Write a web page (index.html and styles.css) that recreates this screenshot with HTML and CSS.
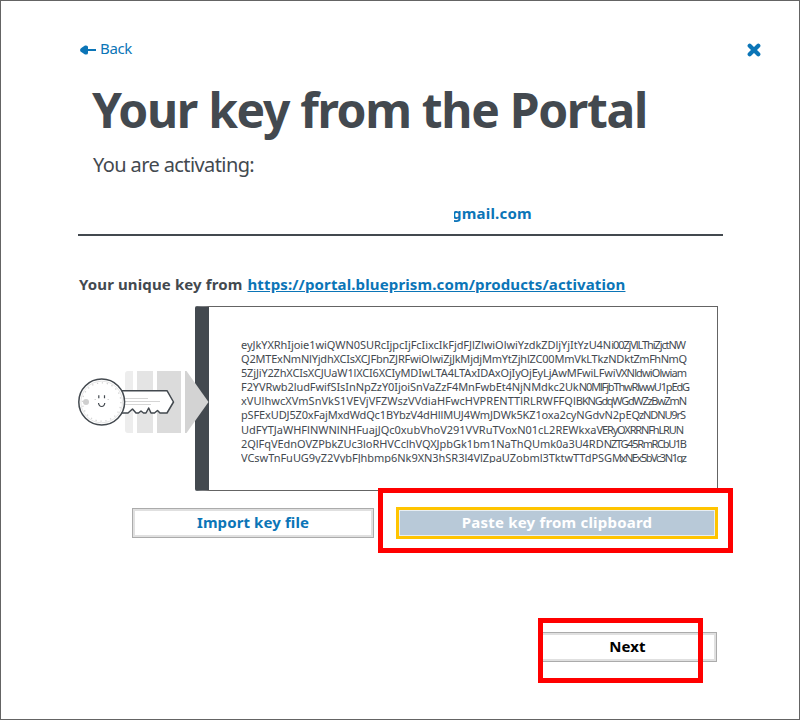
FILE: index.html
```
<!DOCTYPE html>
<html lang="en">
<head>
<meta charset="utf-8">
<title>Your key from the Portal</title>
<link rel="stylesheet" href="styles.css">
</head>
<body>
<main class="window">
  <header class="topbar">
    <a class="back"><svg width="17" height="10" viewBox="0 0 17 10"><path d="M0 5 Q0 3.500 2 2.500 L5 .5 Q8 0 8 2 V4 H16 V6 H8 V8 Q8 10 5 9.500 L2 7.500 Q0 6.500 0 5Z" fill="#0b75b7"/></svg><span>Back</span></a>
    <svg class="close" width="14" height="14" viewBox="0 0 14 14"><path d="M2.700 2.700 11.300 11.300M11.300 2.700 2.700 11.300" stroke="#0b75b7" stroke-width="4.200" stroke-linecap="round"/></svg>
  </header>
  <h1 class="title">Your key from the Portal</h1>
  <p class="subtitle">You are activating:</p>
  <div class="account"><span class="email">gmail.com</span></div>
  <p class="source"><span class="source-label">Your unique key from</span><a class="portal">https://portal.blueprism.com/products/activation</a></p>
  <section class="entry">
    <svg class="key-art" width="132" height="64" viewBox="0 0 132 64">
      <path d="M50 1H55V63H50Q47 63 47 60V4Q47 1 50 1Z" fill="#ededed"/>
      <path d="M59 1H75V63H59Z" fill="#e4e4e4"/>
      <path d="M79 1H103V63H79Z" fill="#dbdbdb"/>
      <path d="M107 1H108.500L130.500 32 108.500 63H107Z" fill="#d3d3d3"/>
      <path d="M43 20.700H89L95.500 32 89 43H82L79.500 40.500 76.500 43H73L70.700 38 68 43H65.500L63 41 60.500 43H58L54.500 39 50 43H43Z" fill="#fff" stroke="#43494f" stroke-width="1.500" stroke-linejoin="round"/>
      <path d="M44 28.500H70M44 31.500H82M44 34.500H73" stroke="#d5d5d5"/>
      <circle cx="23.700" cy="32" r="22.900" fill="#fff" stroke="#43494f" stroke-width="1.500"/>
      <circle cx="23.700" cy="32" r="20.800" fill="none" stroke="#dedede" stroke-width=".8"/>
      <circle cx="23.700" cy="32" r="19.200" fill="none" stroke="#d5d5d5" stroke-width="1.300" stroke-dasharray="1.300 3.700"/>
      <circle cx="8" cy="32" r="3" fill="#cfcfcf"/>
      <path d="M20.800 25.300V28.300M26.500 25.300V28.300M20.500 33Q21 36.500 23.700 36.500 26.300 36.500 26.800 33" fill="none" stroke="#43494f" stroke-width="1.200"/>
      <path d="M16.500 29.500H18M29.500 29.500H31" stroke="#d5d5d5"/>
    </svg>
    <div class="key-box">
      <svg class="key-text" width="455" height="123" viewBox="0 0 455 123">
        <text y="9"><tspan x="0" textLength="373">eyJkYXRhIjoie1wiQWN0SURcIjpcIjFcIixcIkFjdFJlZlwiOlwiYzdkZDljYjItYzU4Ni</tspan><tspan x="372" textLength="73">00ZjVlLThiZjctNW</tspan></text>
        <text y="23"><tspan x="0" textLength="389">Q2MTExNmNlYjdhXCIsXCJFbnZJRFwiOlwiZjJkMjdjMmYtZjhlZC00MmVkLTkzNDk</tspan><tspan x="389" textLength="57">tZmFhNmQ</tspan></text>
        <text y="37"><tspan x="0" textLength="381">5ZjJiY2ZhXCIsXCJUaW1lXCI6XCIyMDIwLTA4LTAxIDAxOjIyOjEyLjAwMFwiLFwiV</tspan><tspan x="380" textLength="66">XNldwiOlwiam</tspan></text>
        <text y="51"><tspan x="0" textLength="346">F2YVRwb2ludFwifSIsInNpZzY0IjoiSnVaZzF4MnFwbEt4NjNMdkc2UkN</tspan><tspan x="345" textLength="104">0MlFjbThwRlwwU1pEdG</tspan></text>
        <text y="65"><tspan x="0" textLength="342">xVUlhwcXVmSnVkS1VEVjVFZWszVVdiaHFwcHVPRENTTlRLRWFFQlB</tspan><tspan x="341" textLength="105">KNGdqWGdWZzBwZmN</tspan></text>
        <text y="79"><tspan x="0" textLength="399">pSFExUDJ5Z0xFajMxdWdQc1BYbzV4dHllMUJ4WmJDWk5KZ1oxa2cyNGdvN2pEQ</tspan><tspan x="398" textLength="47">zNDNU9rS</tspan></text>
        <text y="94"><tspan x="0" textLength="362">UdFYTJaWHFlNWNlNHFuajJQc0xubVhoV291VVRuTVoxN01cL2REWkxaV</tspan><tspan x="361" textLength="82">ERyOXRRNFhLRUN</tspan></text>
        <text y="108"><tspan x="0" textLength="371">2QlFqVEdnOVZPbkZUc3loRHVCclhVQXJpbGk1bm1NaThQUmk0a3U4RDN</tspan><tspan x="370" textLength="76">ZTG45RmRCbU1B</tspan></text>
        <text y="122"><tspan x="0" textLength="371">VCswTnFuUG9yZ2VybFJhbmp6Nk9XN3hSR3l4VlZpaUZobml3TktwTTdPSG</tspan><tspan x="371" textLength="75">MxNEx5bVc3N1qz</tspan></text>
      </svg>
    </div>
  </section>
  <div class="actions">
    <button class="btn import">Import key file</button>
    <div class="marked"><button class="btn paste">Paste key from clipboard</button><i class="mark mark-paste"></i></div>
  </div>
  <footer class="footer">
    <div class="marked"><button class="btn next">Next</button><i class="mark mark-next"></i></div>
  </footer>
</main>
</body>
</html>
```
FILE: styles.css
```
* { box-sizing: border-box; }
body { margin: 0; background: #fff; font-family: "Noto Sans", "Open Sans", sans-serif; color: #43494f; }
svg { display: block; }
h1, p { margin: 0; white-space: nowrap; }
.window { width: 800px; height: 720px; border: 1px solid #646464; padding: 35px 76px 0 77px; }
.topbar { display: flex; justify-content: space-between; height: 26px; margin-right: -38px; }
.back { display: flex; align-items: center; gap: 3px; padding-left: 2px; color: #0b75b7; font-size: 15px; line-height: 24px; height: 24px; letter-spacing: -.35px; }
.back svg { margin-top: 4px; }
.close { margin-top: 7px; }
.title { margin-left: 14px; height: 90px; padding-top: 15px; font-size: 48px; line-height: 66px; font-weight: 700; letter-spacing: -1.33px; }
.subtitle { margin: -1px 0 1px 15px; font-size: 20px; line-height: 28px; letter-spacing: -.6px; }
.account { height: 56px; padding: 22px 0 0 376px; border-bottom: 2px solid #43494f; }
.email { display: block; width: 90px; overflow: hidden; font-size: 15px; line-height: 22px; font-weight: 700; color: #0b75b7; letter-spacing: .2px; text-indent: -2px; }
.source { display: flex; gap: 5px; height: 70px; padding: 37px 0 0 1px; font-size: 15px; line-height: 22px; font-weight: 700; }
.source-label { letter-spacing: .12px; }
.portal { color: #0b75b7; text-decoration: underline; letter-spacing: .13px; }
.entry { display: flex; align-items: center; height: 185px; }
.key-art { position: relative; flex: none; margin: 7px -15px 0 0; }
.key-box { width: 523px; height: 185px; border: 1px solid #646464; border-left: 14px solid #43494f; border-radius: 2px 0 0 2px; padding: 33px 0 0 32px; }
.key-text { font-size: 11px; fill: #43494f; overflow: hidden; }
.actions { display: flex; align-items: center; gap: 22px; height: 32px; margin: 16px 0 0 54px; }
.btn { display: block; margin: 0; padding: 0 0 2px; border: 1px solid #ababab; box-shadow: inset 0 0 0 2px #e0e0e0; background: #fff; font: 700 15px/20px "Noto Sans", sans-serif; color: #0b75b7; letter-spacing: .1px; }
.import { width: 242px; height: 30px; }
.paste { width: 322px; height: 32px; border: 3px solid #ffc400; box-shadow: inset 0 0 0 1px #e8eef3; background: #b8c9d8; color: #fff; letter-spacing: .2px; }
.marked { position: relative; }
.mark { position: absolute; border: 5px solid #f00; }
.mark-paste { left: -18px; top: -19px; width: 355px; height: 65px; }
.footer { display: flex; justify-content: flex-end; margin: 93px 6px 0 0; }
.next { width: 179px; height: 30px; color: #000; }
.mark-next { left: 0; top: -14px; width: 165px; height: 65px; }
```
